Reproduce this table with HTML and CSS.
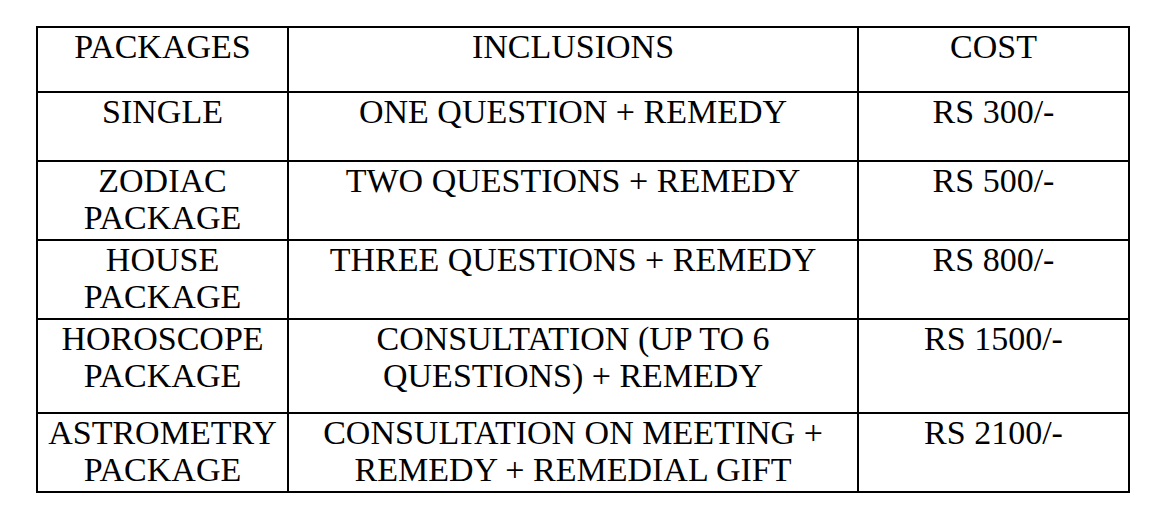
FILE: index.html
```html
<!DOCTYPE html>
<html>
<head>
<meta charset="utf-8">
<link rel="stylesheet" href="styles.css">
</head>
<body>
<table class="price-table">
  <colgroup>
    <col class="col-pkg">
    <col class="col-inc">
    <col class="col-cost">
  </colgroup>
  <tr class="row-head"><td>PACKAGES</td><td>INCLUSIONS</td><td>COST</td></tr>
  <tr class="row-single"><td>SINGLE</td><td>ONE QUESTION + REMEDY</td><td>RS 300/-</td></tr>
  <tr class="row-two"><td>ZODIAC<br>PACKAGE</td><td>TWO QUESTIONS + REMEDY</td><td>RS 500/-</td></tr>
  <tr class="row-two"><td>HOUSE<br>PACKAGE</td><td>THREE QUESTIONS + REMEDY</td><td>RS 800/-</td></tr>
  <tr class="row-tall"><td>HOROSCOPE<br>PACKAGE</td><td>CONSULTATION (UP TO 6<br>QUESTIONS) + REMEDY</td><td>RS 1500/-</td></tr>
  <tr class="row-two"><td>ASTROMETRY<br>PACKAGE</td><td>CONSULTATION ON MEETING +<br>REMEDY + REMEDIAL GIFT</td><td>RS 2100/-</td></tr>
</table>
</body>
</html>
```

FILE: styles.css
```css
html, body {
  margin: 0;
  padding: 0;
  background: #ffffff;
}

body {
  padding: 26px 0 0 36px;
}

.price-table {
  border-collapse: collapse;
  table-layout: fixed;
  width: 1092px;
  font-family: "Liberation Serif", "Times New Roman", serif;
  font-size: 34px;
  line-height: 37px;
  color: #000;
}

.col-pkg { width: 251px; }
.col-inc { width: 570px; }
.col-cost { width: 271px; }

.price-table td {
  border: 2px solid #000;
  text-align: center;
  vertical-align: top;
  padding: 0;
  white-space: nowrap;
}

.row-head td { height: 63px; }
.row-single td { height: 67px; }
.row-two td { height: 77px; }
.row-tall td { height: 92px; }
```
